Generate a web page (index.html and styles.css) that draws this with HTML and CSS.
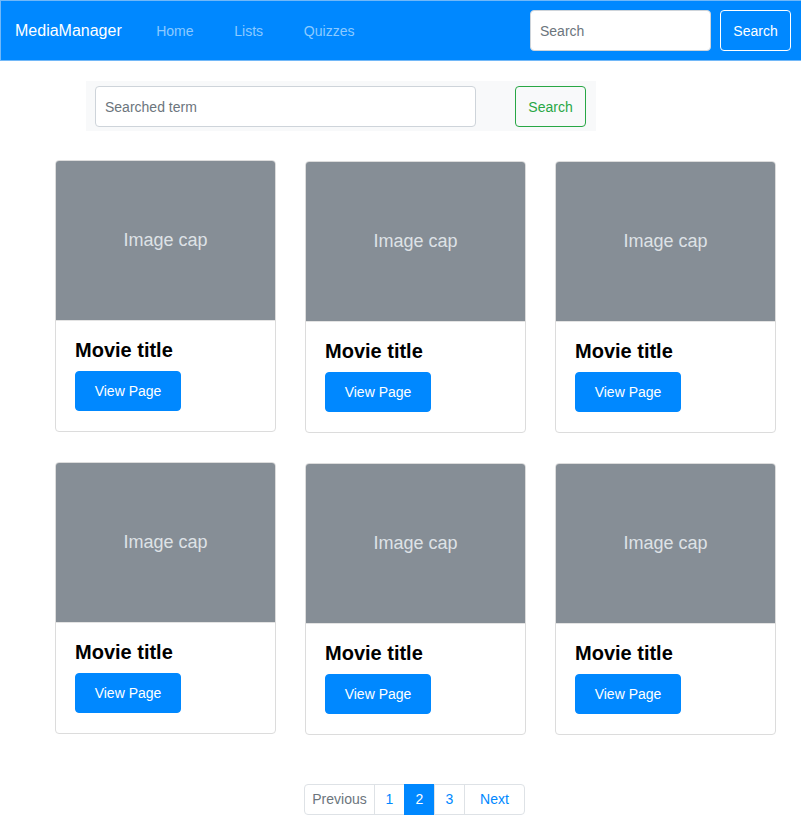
FILE: index.html
```html
<!DOCTYPE html>
<html lang="en">
<head>
  <meta charset="UTF-8">
  <title>MediaManager</title>
  <link rel="stylesheet" href="styles.css">
</head>
<body>
  <nav class="navbar">
    <a class="brand" href="#">MediaManager</a>
    <ul class="nav-links">
      <li><a href="#">Home</a></li>
      <li><a href="#">Lists</a></li>
      <li><a href="#">Quizzes</a></li>
    </ul>
    <form class="nav-search">
      <input type="text" placeholder="Search">
      <button type="button" class="btn btn-outline-light">Search</button>
    </form>
  </nav>

  <div class="page">
    <form class="term-search">
      <input type="text" placeholder="Searched term">
      <button type="button" class="btn btn-outline-success">Search</button>
    </form>

    <div class="cards">
      <div class="card first">
        <div class="card-img">Image cap</div>
        <div class="card-body">
          <h5 class="card-title">Movie title</h5>
          <a href="#" class="btn btn-primary">View Page</a>
        </div>
      </div>
      <div class="card">
        <div class="card-img">Image cap</div>
        <div class="card-body">
          <h5 class="card-title">Movie title</h5>
          <a href="#" class="btn btn-primary">View Page</a>
        </div>
      </div>
      <div class="card">
        <div class="card-img">Image cap</div>
        <div class="card-body">
          <h5 class="card-title">Movie title</h5>
          <a href="#" class="btn btn-primary">View Page</a>
        </div>
      </div>
      <div class="card first">
        <div class="card-img">Image cap</div>
        <div class="card-body">
          <h5 class="card-title">Movie title</h5>
          <a href="#" class="btn btn-primary">View Page</a>
        </div>
      </div>
      <div class="card">
        <div class="card-img">Image cap</div>
        <div class="card-body">
          <h5 class="card-title">Movie title</h5>
          <a href="#" class="btn btn-primary">View Page</a>
        </div>
      </div>
      <div class="card">
        <div class="card-img">Image cap</div>
        <div class="card-body">
          <h5 class="card-title">Movie title</h5>
          <a href="#" class="btn btn-primary">View Page</a>
        </div>
      </div>
    </div>

    <ul class="pagination">
      <li class="page-item disabled prev"><a href="#">Previous</a></li>
      <li class="page-item"><a href="#">1</a></li>
      <li class="page-item active"><a href="#">2</a></li>
      <li class="page-item"><a href="#">3</a></li>
      <li class="page-item next"><a href="#">Next</a></li>
    </ul>
  </div>
</body>
</html>
```

FILE: styles.css
```css
/* Base */
body {
  margin: 0;
  font-family: "Liberation Sans", Arial, sans-serif;
  font-size: 14px;
  color: #212529;
  background: #fff;
}
a {
  text-decoration: none;
}
ul {
  list-style: none;
  margin: 0;
  padding: 0;
}
input {
  font-family: inherit;
  font-size: 14px;
  height: 41px;
  box-sizing: border-box;
  padding: 0 9px;
  border: 1px solid #ced4da;
  border-radius: 4px;
  color: #495057;
  background: #fff;
}
input::placeholder {
  color: #6c757d;
}
.btn {
  display: inline-block;
  font-family: inherit;
  font-size: 14px;
  line-height: 16px;
  height: 41px;
  padding: 11px 0;
  text-align: center;
  border: 1px solid transparent;
  border-radius: 4px;
  background: transparent;
  box-sizing: border-box;
  cursor: pointer;
}

/* Navbar */
.navbar {
  display: flex;
  align-items: center;
  height: 61px;
  box-sizing: border-box;
  background: #0088ff;
  border: 1px solid #72b8f8;
  border-right: none;
  padding: 0 10px 0 14px;
}
.brand {
  color: #fff;
  font-size: 16px;
  margin-right: 14px;
}
.nav-links {
  display: flex;
}
.nav-links a {
  display: block;
  color: #8ccaff;
  padding: 0 20.4px;
}
.nav-search {
  display: flex;
  margin-left: auto;
  gap: 9px;
}
.nav-search input {
  width: 181px;
}
.nav-search .btn,
.term-search .btn {
  width: 71px;
}
.btn-outline-light {
  color: #fff;
  border-color: #fff;
}

/* Term search */
.page {
  padding-top: 20px;
}
.term-search {
  display: flex;
  justify-content: space-between;
  width: 510px;
  margin: 0 0 29px 86px;
  padding: 5px 10px 4px 9px;
  box-sizing: border-box;
  background: #f8f9fa;
}
.term-search input {
  width: 381px;
}
.btn-outline-success {
  color: #28a745;
  border-color: #28a745;
}

/* Cards */
.cards {
  display: grid;
  grid-template-columns: repeat(3, 221px);
  column-gap: 29px;
  row-gap: 30px;
  margin-left: 55px;
  width: 721px;
}
.card {
  border: 1px solid #dcdcdc;
  border-radius: 4px;
  overflow: hidden;
  margin-top: 1px;
  margin-bottom: -1px;
}
.card.first {
  margin-top: 0;
  margin-bottom: 0;
}
.card-img {
  height: 159px;
  background: #868e96;
  color: #dee2e6;
  font-size: 18px;
  display: flex;
  align-items: center;
  justify-content: center;
  border-bottom: 1px solid #e3e3e3;
}
.card-body {
  padding: 17px 19px 20px;
}
.card-title {
  margin: 0 0 9px;
  font-size: 20px;
  line-height: 24px;
  font-weight: bold;
  color: #000;
}
.btn-primary {
  color: #fff;
  background: #0088ff;
  border-color: #0088ff;
  height: 40px;
  width: 106px;
  padding: 11px 0;
}

/* Pagination */
.pagination {
  display: flex;
  justify-content: center;
  width: 721px;
  margin: 50px 0 0 54px;
}
.page-item a {
  display: block;
  height: 31px;
  line-height: 29px;
  box-sizing: border-box;
  border: 1px solid #dee2e6;
  margin-left: -1px;
  color: #0088ff;
  text-align: center;
  width: 31px;
}
.page-item.prev a {
  width: 71px;
  margin-left: 0;
  border-radius: 4px 0 0 4px;
}
.page-item.next a {
  width: 61px;
  border-radius: 0 4px 4px 0;
}
.page-item.disabled a {
  color: #6c757d;
}
.page-item.active a {
  background: #0088ff;
  border-color: #0088ff;
  color: #fff;
}
```
